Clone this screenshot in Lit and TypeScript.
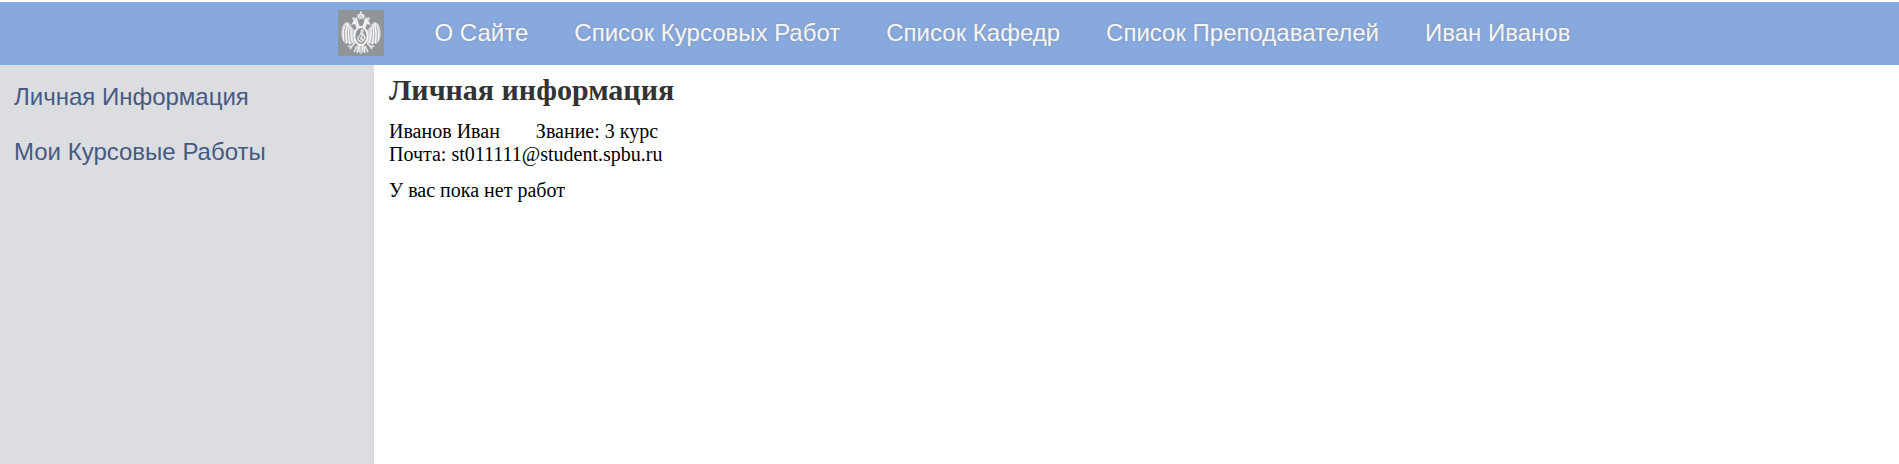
import { LitElement, html, css, svg } from "lit";
import { customElement } from "lit/decorators.js";

@customElement("site-logo")
class SiteLogo extends LitElement {
  static styles = css`
    :host { display: block; }
    svg { display: block; width: 46px; height: 46px; }
  `;

  private half() {
    return svg`
      <path d="M21 19 C18 19 18 16 17 14 L13 15 L15 12 C15 9 19 8 20 11 C20 14 22 15 22 18 Z" fill="#eef0f2"/>
      <path d="M14 9 L15 7 L17 8 L19 7 L19 10 H15 Z" fill="#dfe2e4"/>
      <path d="M17 20 C14 19 13 14 10 12 C7 12 5 14 4 18 C3 22 3 27 5 31 L8 34 L10 33 L12 35 L14 33 L17 34 Z" fill="#d3d6d9"/>
      <path d="M9 13 C6 17 4 22 6 31 M10 14 C8 19 7 24 9 33 M11 16 C10 21 10 26 12 34 M13 18 C12 23 13 28 15 33" stroke="#f7f8f9" stroke-width="1.2" fill="none"/>
      <path d="M8 15 C6 20 6 25 7 32 M10 17 C9 22 9 27 10 32 M12 19 C11 24 12 28 13 32" stroke="#a4a7aa" stroke-width=".7" fill="none"/>
      <path d="M17 33 L13 37 L10 36 M14 36 L12 39 M19 36 L16 42 M20 37 L19 43" stroke="#e6e8ea" stroke-width="1.6" fill="none"/>
    `;
  }

  render() {
    return html`
      <svg viewBox="0 0 46 46" role="img" aria-label="СПбГУ">
        <rect width="46" height="46" fill="#929598"/>
        <g>${this.half()}</g>
        <g transform="translate(46 0) scale(-1 1)">${this.half()}</g>
        <path d="M23 1 V4 M22 2.5 H24" stroke="#e8eaec"/>
        <path d="M20 8 C18 4 21 4 23 3.500 C25 4 28 4 26 8 Z" fill="#eef0f2"/>
        <path d="M22 8 V5 M24 8 V5" stroke="#a4a7aa" stroke-width=".7"/>
        <path d="M19 10 C20 8 26 8 27 10" stroke="#d9dcde" fill="none"/>
        <path d="M20 34 H26 L27 40 L23 44 L19 40 Z" fill="#e2e4e6"/>
        <path d="M23 36 V43" stroke="#a4a7aa" stroke-width=".8"/>
        <ellipse cx="23" cy="26" rx="6.500" ry="9" fill="#909396" stroke="#f2f3f4" stroke-width="1.8"/>
        <path d="M23 19 L26 20 L25 23 L28 27 L26 31 L23 33 L20 31 L19 28 L22 24 Z" fill="#dfe1e3"/>
        <path d="M23 25 L21 29 L24 31 M25 26 V29" stroke="#85888c" fill="none"/>
      </svg>
    `;
  }
}

@customElement("app-root")
class AppRoot extends LitElement {
  static styles = css`
    :host {
      display: flex;
      flex-direction: column;
      min-height: 100vh;
      box-sizing: border-box;
      padding-top: 2px;
      background: #fff;
      color: #000;
      font: 20px/23px "Liberation Serif", "Times New Roman", serif;
    }
    a { text-decoration: none; }
    .bar {
      display: flex;
      justify-content: center;
      align-items: center;
      flex-wrap: wrap;
      background: #87a9de;
      padding: 8px 0 9px 32px;
      font: 24px/28px "Liberation Sans", Arial, sans-serif;
    }
    .home { margin-right: 28px; }
    .item {
      padding: 0 23px;
      color: #f5f5f5;
      text-shadow: 0 0 3px #8888;
    }
    .body { display: flex; flex: 1; }
    .side {
      box-sizing: border-box;
      flex: 0 0 374px;
      display: flex;
      flex-direction: column;
      gap: 27px;
      padding: 18px 14px;
      background: #dbdde1;
      font: 24px/28px "Liberation Sans", Arial, sans-serif;
    }
    .side a { color: #465a82; }
    .main { flex: 1; padding: 8px 15px; }
    h1 {
      margin: 0 0 13px;
      color: #333;
      font-size: 30px;
      line-height: 34px;
    }
    p { margin: 0; }
    .row { display: flex; gap: 36px; }
    .empty { margin-top: 13px; }
  `;

  private items = [
    "О Сайте",
    "Список Курсовых Работ",
    "Список Кафедр",
    "Список Преподавателей",
    "Иван Иванов",
  ];

  render() {
    return html`
      <nav class="bar">
        <a class="home" href="#"><site-logo></site-logo></a>
        ${this.items.map((t) => html`<a class="item" href="#">${t}</a>`)}
      </nav>
      <div class="body">
        <nav class="side">
          <a href="#">Личная Информация</a>
          <a href="#">Мои Курсовые Работы</a>
        </nav>
        <main class="main">
          <h1>Личная информация</h1>
          <p class="row"><span>Иванов Иван</span><span>Звание: 3 курс</span></p>
          <p>Почта: st011111@student.spbu.ru</p>
          <p class="empty">У вас пока нет работ</p>
        </main>
      </div>
    `;
  }
}
